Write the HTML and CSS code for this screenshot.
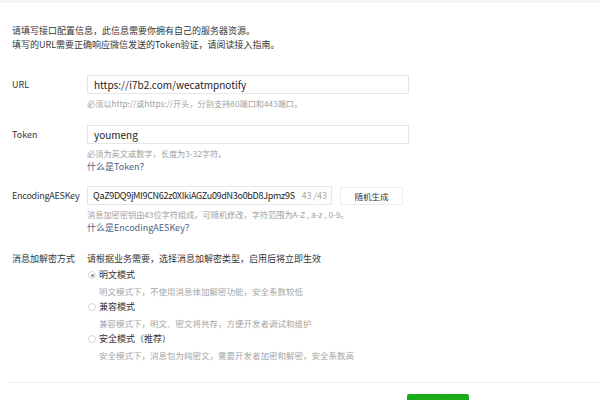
FILE: index.html
```html
<!DOCTYPE html>
<html lang="zh-CN">
<head>
<meta charset="utf-8">
<link rel="stylesheet" href="styles.css">
</head>
<body>
<div class="topband"></div>
<div class="page">
  <div class="intro">
    <p>请填写接口配置信息，此信息需要你拥有自己的服务器资源。</p>
    <p>填写的URL需要正确响应微信发送的Token验证，请阅读接入指南。</p>
  </div>

  <div class="row row-url">
    <div class="label">URL</div>
    <div class="field">
      <div class="input wide">https://i7b2.com/wecatmpnotify</div>
      <div class="hint">必须以http://或https://开头，分别支持80端口和443端口。</div>
    </div>
  </div>

  <div class="row row-token">
    <div class="label">Token</div>
    <div class="field">
      <div class="input wide">youmeng</div>
      <div class="hint">必须为英文或数字，长度为3-32字符。</div>
      <div class="link">什么是Token？</div>
    </div>
  </div>

  <div class="row row-aes">
    <div class="label label-aes">EncodingAESKey</div>
    <div class="field">
      <div class="aes-line">
        <div class="input aes"><span class="val">QaZ9DQ9jMI9CN62z0XIkiAGZu09dN3o0bD8Jpmz9S</span><span class="count">43 /43</span></div>
        <div class="btn-gen">随机生成</div>
      </div>
      <div class="hint">消息加密密钥由43位字符组成，可随机修改，字符范围为A-Z , a-z , 0-9。</div>
      <div class="link">什么是EncodingAESKey？</div>
    </div>
  </div>

  <div class="row row-mode">
    <div class="label mode-label">消息加解密方式</div>
    <div class="field">
      <div class="mode-desc">请根据业务需要，选择消息加解密类型，启用后将立即生效</div>
      <div class="radio"><span class="dot checked"></span>明文模式</div>
      <div class="radio-desc">明文模式下，不使用消息体加解密功能，安全系数较低</div>
      <div class="radio"><span class="dot"></span>兼容模式</div>
      <div class="radio-desc">兼容模式下，明文、密文将共存，方便开发者调试和维护</div>
      <div class="radio"><span class="dot"></span>安全模式（推荐）</div>
      <div class="radio-desc">安全模式下，消息包为纯密文，需要开发者加密和解密，安全系数高</div>
    </div>
  </div>

  <div class="divider"></div>
  <div class="actions"><div class="btn-submit">提交</div></div>
</div>
</body>
</html>
```

FILE: styles.css
```css
* { box-sizing: border-box; margin: 0; padding: 0; }
html, body { background: #fff; overflow: hidden; }
body {
  font-family: "Noto Sans CJK SC", "Noto Sans", sans-serif;
  color: #353535;
  font-size: 9px;
  width: 600px;
  height: 400px;
}
.topband { height: 3px; background: #f3f4f6; }
.page { padding: 21px 0 0 12px; }
.intro p { line-height: 14px; font-size: 9px; color: #353535; }
.row { display: flex; }
.label { width: 75px; flex: none; line-height: 19px; font-size: 9px; color: #353535; }
.label-aes { letter-spacing: -0.25px; white-space: nowrap; }
.field { display: flex; flex-direction: column; align-items: flex-start; }
.row-url { margin-top: 23px; }
.row-token { margin-top: 15px; }
.row-aes { margin-top: 13px; }
.row-mode { margin-top: 17px; }
.input {
  height: 19px;
  border: 1px solid #e7e7e7;
  padding: 0 6px;
  font-size: 10px;
  line-height: 17px;
  color: #222;
  background: #fff;
  white-space: nowrap;
}
.wide { width: 322px; }
.hint { margin-top: 3px; line-height: 13px; color: #a0a0a0; font-size: 8.2px; }
.link { line-height: 13px; color: #4f5f87; font-size: 9px; }
.aes-line { display: flex; gap: 8px; align-items: center; }
.input.aes { width: 245px; display: flex; justify-content: space-between; padding: 0 4px 0 5px; font-size: 9px; }
.val { letter-spacing: -0.3px; }
.count { color: #aaa; font-size: 9px; }
.btn-gen {
  width: 63px; height: 18px; border: 1px solid #ececec; border-radius: 2px;
  text-align: center; line-height: 16px; font-size: 8.5px; color: #353535; background: #fff;
}
.mode-label { line-height: 16px; }
.mode-desc, .radio, .radio-desc { line-height: 16px; }
.mode-desc { font-size: 9px; }
.radio { display: flex; align-items: center; padding-left: 1px; font-size: 9px; }
.dot {
  width: 8px; height: 8px; border-radius: 50%; border: 1px solid #d6d6d6;
  margin-right: 3px; position: relative; background: #fff;
}
.dot.checked::after {
  content: ""; position: absolute; left: 1.5px; top: 1.5px; width: 3px; height: 3px;
  border-radius: 50%; background: #888;
}
.radio-desc { padding-left: 12px; color: #a6a6a6; font-size: 8.5px; }
.divider { margin-top: 19px; margin-left: -3px; height: 1px; background: #ececec; }
.actions { padding: 11px 0 0 395px; }
.btn-submit {
  width: 62px; height: 22px; background: #1aad19; border-radius: 2px; color: #fff;
  text-align: center; line-height: 22px; font-size: 9px;
}
```
